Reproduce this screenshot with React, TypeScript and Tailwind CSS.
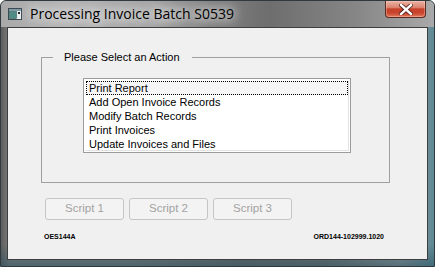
import React from "react";

const items = [
  "Print Report",
  "Add Open Invoice Records",
  "Modify Batch Records",
  "Print Invoices",
  "Update Invoices and Files",
];

function TitleIcon() {
  return (
    <svg width="14" height="12" viewBox="0 0 14 12" className="shrink-0">
      <rect x="0.5" y="0.5" width="13" height="11" fill="#e8eef0" stroke="#3a4a50" />
      <rect x="1" y="1" width="12" height="2" fill="#7e9aa4" />
      <rect x="1.5" y="3.5" width="7" height="7" fill="#4f8c86" stroke="#2f5a58" strokeWidth="0.6" />
      <rect x="10" y="4" width="2" height="2" fill="#222" />
    </svg>
  );
}

function CloseButton() {
  return (
    <div className="absolute right-[8px] top-0 w-[41px] h-[17px] rounded-b-[4px] border border-t-0 border-[#5b2a22] bg-[linear-gradient(to_bottom,#eab3a6_0%,#dc8470_40%,#c5412a_50%,#c9442c_75%,#e07a5c_100%)] flex items-center justify-center shadow-[inset_0_0_0_1px_rgba(255,220,210,0.35)]">
      <svg width="14" height="11" viewBox="0 0 14 11">
        <path d="M2 1 L12 10 M12 1 L2 10" stroke="#4a1a12" strokeWidth="4" strokeLinecap="square" />
        <path d="M2 1 L12 10 M12 1 L2 10" stroke="#ffffff" strokeWidth="2.4" strokeLinecap="square" />
      </svg>
    </div>
  );
}

export default function App() {
  return (
    <div className="relative w-[435px] h-[267px] flex flex-col overflow-hidden rounded-t-[6px] border border-[#2f3a3e] bg-[linear-gradient(to_bottom,transparent_0%,transparent_92%,rgba(40,80,95,0.55)_100%),linear-gradient(to_right,#5e5e5e_0%,#7e7e7e_2%,#7e7e7e_30%,#6b6b6b_55%,#727272_75%,#8e9698_92%,#5f8a96_100%)] font-['Liberation_Sans',Arial,sans-serif]">
      {/* Title bar */}
      <div className="h-[26px] shrink-0 flex items-center bg-[linear-gradient(to_right,#a9a9a9_0%,#b5b5b5_15%,#a3a3a3_35%,#7c7c7c_50%,#6e6e6e_62%,#868686_82%,#a9a9a9_100%)]">
        <div className="ml-[7px]">
          <TitleIcon />
        </div>
        <span className="ml-[8px] text-[14px] leading-none text-black font-['Open_Sans','Noto_Sans',sans-serif] [text-shadow:0_0_8px_rgba(255,255,255,0.95),0_0_14px_rgba(255,255,255,0.85),0_0_22px_rgba(255,255,255,0.7)]">
          Processing Invoice Batch S0539
        </span>
        <CloseButton />
      </div>

      {/* Client area */}
      <div className="flex-1 mx-[6px] mb-[6px] border border-[#3e3e3e] bg-[#f0f0f0] flex flex-col text-[11px] text-black">
        <fieldset className="ml-[33px] mt-[22px] w-[349px] border border-[#a0a0a0] px-[11px] pb-[29px]">
          <legend className="pl-[11px] pr-[12px] leading-[14px]">Please Select an Action</legend>
          <div className="ml-[30px] mt-[14px] w-[268px] h-[75px] border border-[#9c9c9c] bg-white p-px">
            <div className="h-full w-full border border-transparent border-r-[#e2e2e2] border-b-[#e2e2e2] flex flex-col">
              {items.map((t, i) => (
                <div
                  key={t}
                  className={
                    i === 0
                      ? "h-[14px] leading-[12px] pl-[2px] border border-dotted border-black bg-[#f6f6f6]"
                      : "h-[14px] leading-[12px] pl-[2px] border border-transparent"
                  }
                >
                  {t}
                </div>
              ))}
            </div>
          </div>
        </fieldset>

        <div className="ml-[37px] mt-[15px] flex gap-[5px]">
          {["Script 1", "Script 2", "Script 3"].map((s) => (
            <div
              key={s}
              className="w-[79px] h-[22px] rounded-[3px] border border-[#c6c6c6] bg-[#f3f3f3] text-[#a2a2a2] flex items-center justify-center text-[11.5px]"
            >
              {s}
            </div>
          ))}
        </div>

        <div className="mt-[13px] pl-[36px] pr-[43px] flex justify-between text-[7px] font-bold leading-[8px]">
          <span>OES144A</span>
          <span>ORD144-102999.1020</span>
        </div>
      </div>
    </div>
  );
}
